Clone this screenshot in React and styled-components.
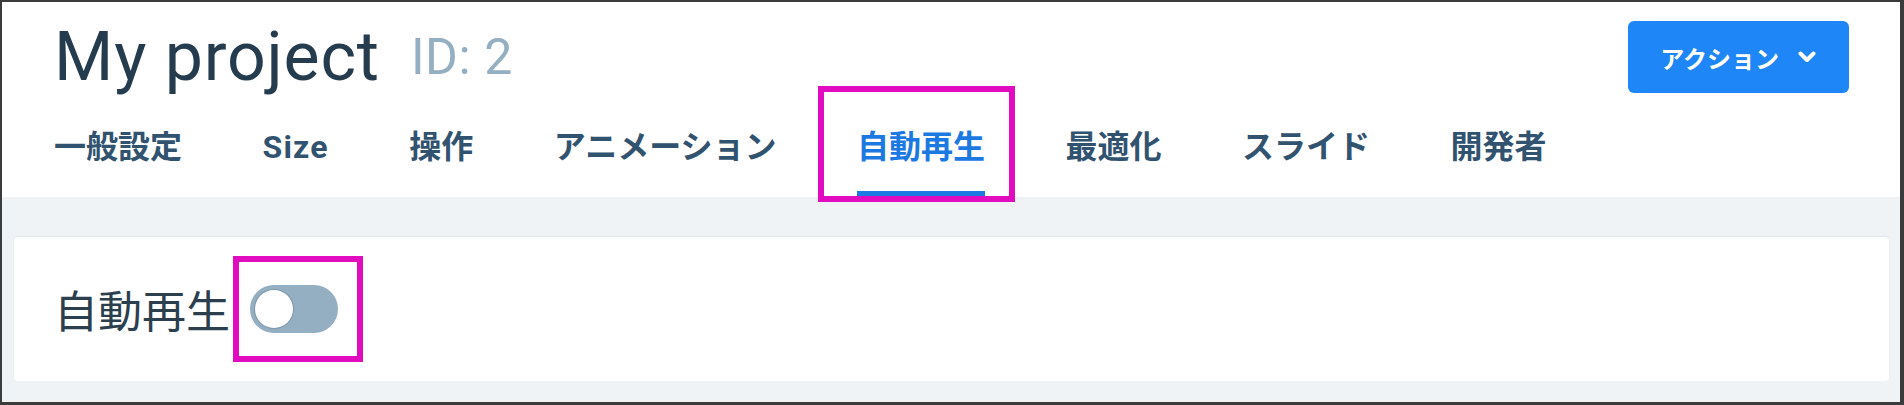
import React from 'react';
import styled, { createGlobalStyle } from 'styled-components';

const GlobalStyle = createGlobalStyle`
  html, body {
    margin: 0;
    padding: 0;
    background: #ffffff;
  }
  * {
    box-sizing: border-box;
  }
`;

const FONT = `Roboto, "Noto Sans CJK JP", sans-serif`;

const Frame = styled.div`
  height: 405px;
  border-style: solid;
  border-color: #3b3b3b;
  border-width: 2px 4px 3px 2px;
  background: #f0f3f6;
  display: flex;
  flex-direction: column;
  overflow: hidden;
  font-family: ${FONT};
`;

const Header = styled.header`
  background: #ffffff;
  padding: 19px 51px 0 52px;
`;

const TitleRow = styled.div`
  height: 72px;
  display: flex;
  align-items: center;
  justify-content: space-between;
`;

const TitleGroup = styled.div`
  display: flex;
  align-items: center;
  gap: 31px;
`;

const Title = styled.h1`
  margin: 0;
  font-size: 68px;
  font-weight: 400;
  line-height: normal;
  color: #253c4e;
  letter-spacing: 0.8px;
`;

const ProjectId = styled.span`
  font-size: 50px;
  line-height: normal;
  color: #94afc1;
  letter-spacing: 0.6px;
`;

const ActionButton = styled.button`
  height: 72px;
  padding: 0 33px 0 32px;
  border: none;
  border-radius: 6px;
  background: #1f86f8;
  color: #ffffff;
  font-family: ${FONT};
  font-size: 24px;
  font-weight: 700;
  display: flex;
  align-items: center;
  gap: 19px;
`;

const TabBar = styled.nav`
  margin-top: 34px;
  display: flex;
  gap: 80.5px;
`;

const Tab = styled.div`
  position: relative;
  font-size: 32px;
  font-weight: 700;
  line-height: 40px;
  padding-bottom: 24px;
  border-bottom: 6px solid ${p => (p.$active ? '#1c79e2' : 'transparent')};
  color: ${p => (p.$active ? '#1c79e2' : '#31536f')};
  letter-spacing: ${p => (p.$latin ? '1.2px' : '0')};
  white-space: nowrap;
`;

const Mark = styled.span`
  position: absolute;
  top: ${p => p.$t}px;
  right: ${p => p.$r}px;
  bottom: ${p => p.$b}px;
  left: ${p => p.$l}px;
  border: 6px solid #e10cbf;
  pointer-events: none;
`;

const Content = styled.main`
  flex: 1;
  padding: 40px 11px 0 12px;
`;

const Card = styled.section`
  height: 144px;
  background: #ffffff;
  border-radius: 4px;
  box-shadow: 0 -1px 2px rgba(200, 210, 220, 0.35);
  padding: 0 40px;
  display: flex;
  align-items: center;
  gap: 20px;
`;

const Label = styled.span`
  font-size: 44px;
  font-weight: 400;
  color: #2b3f4f;
`;

const Switch = styled.div`
  position: relative;
  width: 88px;
  height: 48px;
  border-radius: 24px;
  background: ${p => (p.$on ? '#1f86f8' : '#94afc1')};
`;

const Knob = styled.span`
  position: absolute;
  top: 5px;
  left: ${p => (p.$on ? '45px' : '5px')};
  width: 38px;
  height: 38px;
  border-radius: 50%;
  background: #ffffff;
  box-shadow: 0 0 0 1px #7f99ab;
`;

const tabs = ['一般設定', 'Size', '操作', 'アニメーション', '自動再生', '最適化', 'スライド', '開発者'];

export default function App() {
  return (
    <>
      <GlobalStyle />
      <Frame>
        <Header>
          <TitleRow>
            <TitleGroup>
              <Title>My project</Title>
              <ProjectId>ID: 2</ProjectId>
            </TitleGroup>
            <ActionButton>
              アクション
              <svg width="18" height="12" viewBox="0 0 18 12">
                <path d="M2.5 2.5 L9 9 L15.5 2.5" fill="none" stroke="#ffffff" strokeWidth="4" strokeLinecap="round" strokeLinejoin="round" />
              </svg>
            </ActionButton>
          </TitleRow>
          <TabBar>
            {tabs.map(t => (
              <Tab key={t} $active={t === '自動再生'} $latin={t === 'Size'}>
                {t}
                {t === '自動再生' && <Mark $t={-41} $r={-30} $b={-11} $l={-39} />}
              </Tab>
            ))}
          </TabBar>
        </Header>
        <Content>
          <Card>
            <Label>自動再生</Label>
            <Switch $on={false}>
              <Knob $on={false} />
              <Mark $t={-29} $r={-25} $b={-29} $l={-17} />
            </Switch>
          </Card>
        </Content>
      </Frame>
    </>
  );
}
